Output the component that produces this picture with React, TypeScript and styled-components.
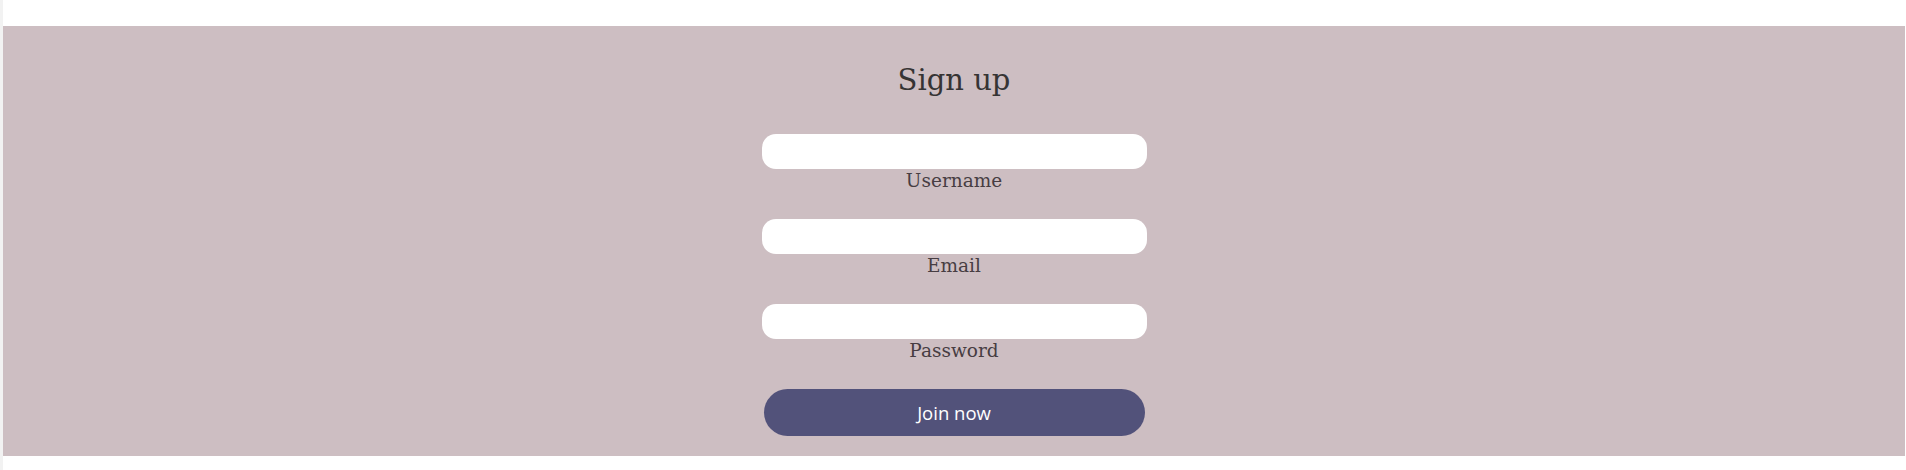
import React from "react";
import styled, { createGlobalStyle } from "styled-components";

const Global = createGlobalStyle`
  html, body { margin: 0; padding: 0; background: #ffffff; }
  * { box-sizing: border-box; }
`;

const Page = styled.div`
  width: 1906px;
  padding-top: 26px;
  padding-right: 1px;
  border-left: 3px solid #f2f2f2;
  min-height: 470px;
`;

const Panel = styled.section`
  background: #cdbec2;
  display: flex;
  flex-direction: column;
  align-items: center;
  padding: 36px 0 20px;
`;

const Title = styled.h1`
  margin: 0 0 36px;
  font-family: "DejaVu Serif", "Liberation Serif", serif;
  font-weight: normal;
  font-size: 29px;
  line-height: 36px;
  color: #363434;
`;

const Form = styled.form`
  display: flex;
  flex-direction: column;
  align-items: center;
`;

const Field = styled.div`
  display: flex;
  flex-direction: column;
  align-items: center;
  margin-bottom: 26px;
`;

const Input = styled.input`
  width: 385px;
  height: 35px;
  border: none;
  outline: none;
  border-radius: 14px;
  background: #ffffff;
  padding: 0 14px;
  font-size: 16px;
`;

const Label = styled.label`
  padding-top: 1px;
  padding-bottom: 1px;
  font-family: "DejaVu Serif", "Liberation Serif", serif;
  font-size: 18.5px;
  line-height: 22px;
  color: #473d42;
`;

const Button = styled.button`
  width: 381px;
  height: 47px;
  border: none;
  border-radius: 24px;
  background: #52527a;
  color: #ffffff;
  font-family: "Open Sans", "Noto Sans", sans-serif;
  font-size: 18.5px;
  cursor: pointer;
`;

export default function App() {
  return (
    <>
      <Global />
      <Page>
        <Panel>
          <Title>Sign up</Title>
          <Form onSubmit={(e) => e.preventDefault()}>
            <Field>
              <Input id="username" type="text" />
              <Label htmlFor="username">Username</Label>
            </Field>
            <Field>
              <Input id="email" type="email" />
              <Label htmlFor="email">Email</Label>
            </Field>
            <Field>
              <Input id="password" type="password" />
              <Label htmlFor="password">Password</Label>
            </Field>
            <Button type="submit">Join now</Button>
          </Form>
        </Panel>
      </Page>
    </>
  );
}
